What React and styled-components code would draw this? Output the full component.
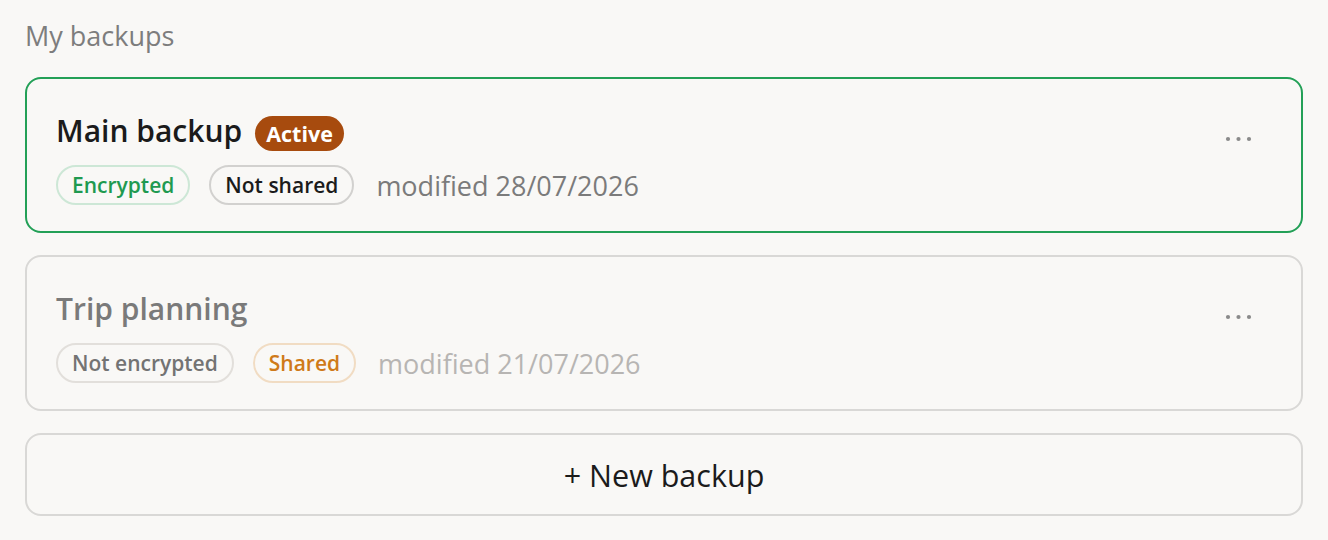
import React from "react";
import styled, { createGlobalStyle } from "styled-components";

const GlobalStyle = createGlobalStyle`
  html, body { margin: 0; padding: 0; background: #f9f8f6; }
  body { font-family: "Open Sans", "Noto Sans", sans-serif; color: #1b1b1b; }
  * { box-sizing: border-box; }
`;

const Page = styled.div`
  padding: 18px 25px 24px 25px;
  display: flex;
  flex-direction: column;
`;

const Heading = styled.h2`
  margin: 0 0 23px 0;
  font-size: 27px;
  font-weight: 400;
  line-height: 36px;
  color: #7d7d7d;
`;

const List = styled.div`
  display: flex;
  flex-direction: column;
  gap: 22px;
`;

const Card = styled.div`
  display: flex;
  align-items: flex-start;
  border: 2px solid ${(p) => (p.$active ? "#23a057" : "#d9d8d6")};
  border-radius: 16px;
  padding: 34px 47px 26px 29px;
  background: #f9f8f6;
`;

const CardBody = styled.div`
  flex: 1;
  display: flex;
  flex-direction: column;
  gap: 16px;
`;

const TitleRow = styled.div`
  display: flex;
  align-items: baseline;
  gap: 13px;
  height: 36px;
`;

const Title = styled.div`
  font-size: 30px;
  font-weight: 600;
  line-height: 36px;
  color: ${(p) => (p.$muted ? "#7a7a7a" : "#1b1b1b")};
`;

const Badge = styled.span`
  display: inline-flex;
  align-items: center;
  height: 35px;
  padding: 0 11px;
  border-radius: 18px;
  background: #a74b0e;
  color: #ffffff;
  font-size: 21.5px;
  font-weight: 700;
`;

const MetaRow = styled.div`
  display: flex;
  align-items: center;
  gap: 19px;
`;

const tones = {
  green: { color: "#1f9a50", border: "#cde7d6" },
  neutral: { color: "#1b1b1b", border: "#d2d1cf" },
  muted: { color: "#737373", border: "#e2dfdb" },
  orange: { color: "#cf7a19", border: "#f1dcc3" },
};

const Pill = styled.span`
  display: inline-flex;
  align-items: center;
  height: 40px;
  padding: 0 14px;
  border-radius: 20px;
  border: 2px solid ${(p) => tones[p.$tone].border};
  color: ${(p) => tones[p.$tone].color};
  font-size: 21px;
  font-weight: 600;
`;

const Modified = styled.span`
  font-size: 27px;
  font-weight: 400;
  color: ${(p) => (p.$muted ? "#b7b5b3" : "#7b7b7b")};
  margin-left: 3px;
`;

const MenuButton = styled.button`
  display: flex;
  align-items: center;
  justify-content: center;
  border: none;
  background: transparent;
  padding: 0;
  margin-top: 18px;
  width: 30px;
  height: 16px;
  color: #8a8a8a;
  cursor: pointer;
`;

const NewButton = styled.button`
  height: 83px;
  border: 2px solid #d9d8d6;
  border-radius: 16px;
  background: #f9f8f6;
  font-family: "Open Sans", "Noto Sans", sans-serif;
  font-size: 30.5px;
  font-weight: 400;
  color: #1b1b1b;
  cursor: pointer;
`;

const Dots = () => (
  <svg width="28" height="6" viewBox="0 0 28 6" aria-hidden="true">
    <circle cx="3" cy="3" r="2.1" fill="currentColor" />
    <circle cx="13.5" cy="3" r="2.1" fill="currentColor" />
    <circle cx="24" cy="3" r="2.1" fill="currentColor" />
  </svg>
);

const backups = [
  {
    name: "Main backup",
    active: true,
    pills: [
      { label: "Encrypted", tone: "green" },
      { label: "Not shared", tone: "neutral" },
    ],
    modified: "modified 28/07/2026",
  },
  {
    name: "Trip planning",
    active: false,
    pills: [
      { label: "Not encrypted", tone: "muted" },
      { label: "Shared", tone: "orange" },
    ],
    modified: "modified 21/07/2026",
  },
];

export default function App() {
  return (
    <>
      <GlobalStyle />
      <Page>
        <Heading>My backups</Heading>
        <List>
          {backups.map((b) => (
            <Card key={b.name} $active={b.active}>
              <CardBody>
                <TitleRow>
                  <Title $muted={!b.active}>{b.name}</Title>
                  {b.active && <Badge>Active</Badge>}
                </TitleRow>
                <MetaRow>
                  {b.pills.map((p) => (
                    <Pill key={p.label} $tone={p.tone}>
                      {p.label}
                    </Pill>
                  ))}
                  <Modified $muted={!b.active}>{b.modified}</Modified>
                </MetaRow>
              </CardBody>
              <MenuButton aria-label="More options">
                <Dots />
              </MenuButton>
            </Card>
          ))}
          <NewButton>+ New backup</NewButton>
        </List>
      </Page>
    </>
  );
}
